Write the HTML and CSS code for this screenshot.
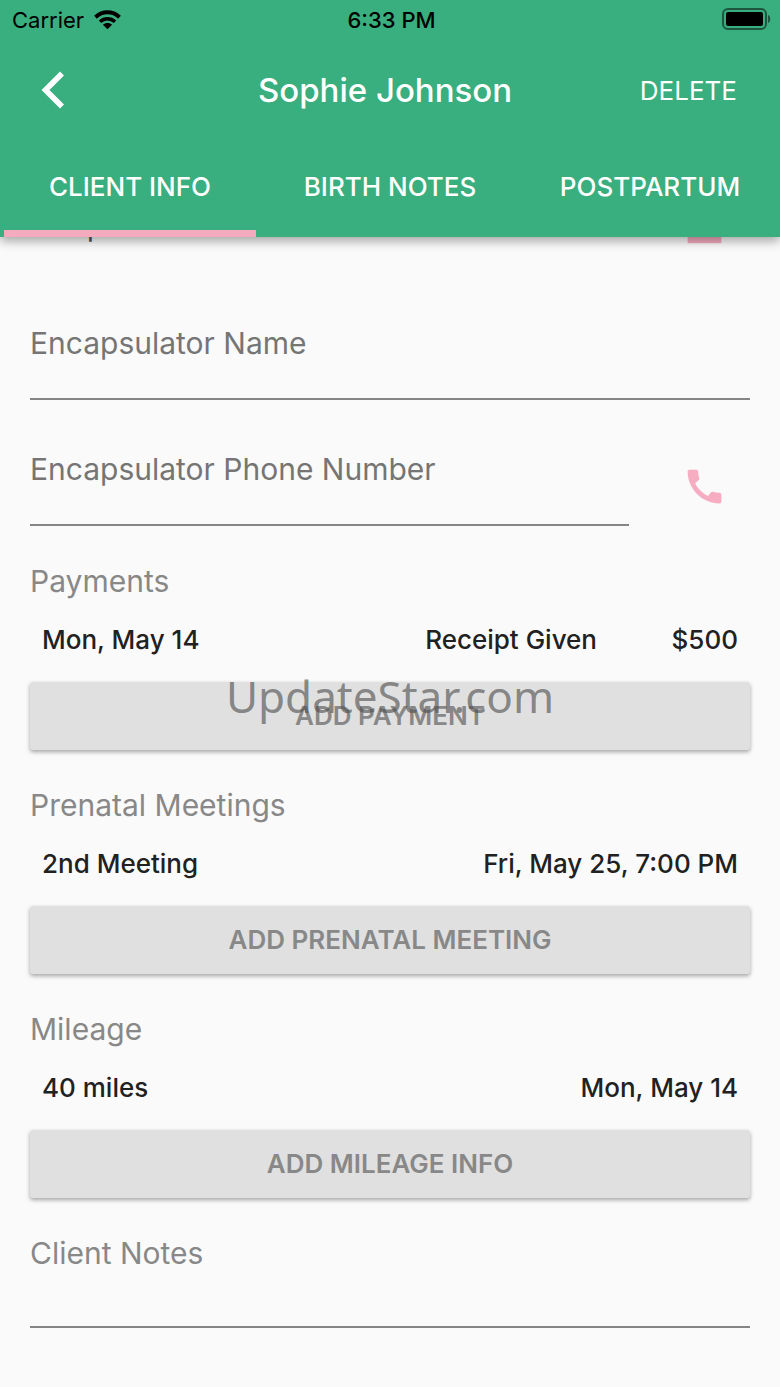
FILE: index.html
```html
<!DOCTYPE html>
<html lang="en">
<head>
    <meta charset="UTF-8">
    <meta name="viewport" content="width=device-width, initial-scale=1.0">
    <title>Sophie Johnson</title>
    <link rel="stylesheet" href="styles.css">
</head>
<body>
    <header class="app-header">
        <div class="status-bar">
            <div class="carrier">
                <span>Carrier</span>
                <svg width="28" height="20" viewBox="0 0 28 20" fill="none" stroke="#000">
                    <path d="M1.500 7.200C8.500 .6 18.500 .6 25.500 7.200" stroke-width="4"/>
                    <path d="M6 11.800c4.300-4 10.700-4 15 0" stroke-width="3.600"/>
                    <path d="M13.500 19.200l-4.600-4.400c2.600-2.300 6.600-2.300 9.200 0z" fill="#000" stroke="none"/>
                </svg>
            </div>
            <span class="time">6:33 PM</span>
            <svg class="battery" width="50" height="22" viewBox="0 0 50 22">
                <rect x="2" y="1" width="43" height="20" rx="5" fill="none" stroke="#1d573f" stroke-width="2"/>
                <rect x="5" y="4" width="37" height="14" rx="2" fill="#000"/>
                <path d="M47 7c3 1 3 7 0 8z" fill="#1d573f"/>
            </svg>
        </div>

        <div class="title-bar">
            <button class="back" type="button" aria-label="Back">
                <svg width="24" height="38" viewBox="0 0 24 38">
                    <path d="M21 2.500L4.500 19L21 35.500" fill="none" stroke="#fff" stroke-width="5.600"/>
                </svg>
            </button>
            <h1>Sophie Johnson</h1>
            <button class="delete" type="button">DELETE</button>
        </div>

        <nav class="tabs">
            <a class="tab active" href="#info">CLIENT INFO</a>
            <a class="tab" href="#birth">BIRTH NOTES</a>
            <a class="tab" href="#postpartum">POSTPARTUM</a>
        </nav>
    </header>

    <main id="info">
        <!-- Row scrolled under the header -->
        <div class="date-row">
            <span>Wrap Date</span>
            <button class="icon-button" type="button" aria-label="Pick date">
                <svg width="45" height="45" viewBox="0 0 24 24" fill="#f6adc1">
                    <path d="M19 4h-1V2h-2v2H8V2H6v2H5c-1.100 0-2 .9-2 2v16h18V6c0-1.100-.9-2-2-2zm0 14H5V9h14v9z"/>
                </svg>
            </button>
        </div>

        <div class="field">
            <label for="enc-name">Encapsulator Name</label>
            <input type="text" id="enc-name">
        </div>

        <div class="field-row">
            <div class="field">
                <label for="enc-phone">Encapsulator Phone Number</label>
                <input type="tel" id="enc-phone">
            </div>
            <button class="icon-button call" type="button" aria-label="Call">
                <svg width="45" height="45" viewBox="0 0 24 24" fill="#f6adc1">
                    <path d="M20.010 15.380c-1.230 0-2.420-.2-3.530-.56-.35-.12-.74-.03-1.010.24l-1.570 1.970c-2.830-1.350-5.480-3.900-6.890-6.830l1.950-1.660c.27-.28.35-.67.24-1.020-.37-1.110-.56-2.300-.56-3.530 0-.54-.45-.99-.99-.99H4.190C3.650 3 3 3.240 3 3.990 3 13.280 10.730 21 20.010 21c.71 0 .99-.63.99-1.180v-3.450c0-.54-.45-.99-.99-.99z"/>
                </svg>
            </button>
        </div>

        <section>
            <h2>Payments</h2>
            <div class="entry">
                <span>Mon, May 14</span>
                <span class="receipt">Receipt Given</span>
                <span class="amount">$500</span>
            </div>
            <button class="add" type="button">ADD PAYMENT</button>
            <span class="watermark">UpdateStar.com</span>
        </section>

        <section>
            <h2>Prenatal Meetings</h2>
            <div class="entry">
                <span>2nd Meeting</span>
                <span>Fri, May 25, 7:00 PM</span>
            </div>
            <button class="add" type="button">ADD PRENATAL MEETING</button>
        </section>

        <section>
            <h2>Mileage</h2>
            <div class="entry">
                <span>40 miles</span>
                <span>Mon, May 14</span>
            </div>
            <button class="add" type="button">ADD MILEAGE INFO</button>
        </section>

        <div class="notes">
            <label for="notes">Client Notes</label>
            <textarea id="notes"></textarea>
        </div>
    </main>
</body>
</html>
```
FILE: styles.css
```css
* {
    box-sizing: border-box;
}
body {
    margin: 0;
    background: #fafafa;
    color: #212121;
    font-family: Inter, "Liberation Sans", sans-serif;
    font-size: 26px;
}
button {
    border: none;
    background: none;
    padding: 0;
    font: inherit;
    color: inherit;
    cursor: pointer;
}
svg {
    display: block;
}
.app-header {
    position: sticky;
    top: 0;
    z-index: 2;
    background: #39ae7e;
    color: white;
    box-shadow: 0 4px 10px rgba(0, 0, 0, 0.35);
}
.status-bar {
    display: grid;
    grid-template-columns: 1fr auto 1fr;
    align-items: center;
    height: 40px;
    padding: 0 9px 0 12px;
    color: black;
    font-size: 22px;
}
.carrier {
    display: flex;
    align-items: center;
    gap: 10px;
}
.time {
    font-weight: 500;
}
.battery {
    justify-self: end;
    margin-bottom: 2px;
}
.title-bar {
    display: grid;
    grid-template-columns: 1fr auto 1fr;
    align-items: center;
    height: 100px;
    padding: 0 43px 0 33px;
}
.back {
    justify-self: start;
    padding: 0 8px;
}
h1 {
    margin: 0;
    font-size: 33px;
    font-weight: 500;
}
.delete {
    justify-self: end;
}
.tabs {
    display: grid;
    grid-template-columns: repeat(3, 1fr);
    height: 97px;
}
.tab {
    position: relative;
    padding-top: 31px;
    line-height: 32px;
    color: white;
    font-weight: 500;
    text-align: center;
    text-decoration: none;
}
.tab.active::after {
    content: "";
    position: absolute;
    left: 4px;
    right: 4px;
    bottom: 0;
    height: 7px;
    background: #f3abbd;
}
main {
    margin-top: -35px;
    padding: 0 30px 59px;
}
.date-row {
    display: flex;
    align-items: center;
    justify-content: space-between;
    height: 45px;
    margin-bottom: 78px;
    color: #555;
    font-size: 30px;
}
.icon-button {
    margin-right: 23px;
}
.field-row {
    display: flex;
    align-items: flex-start;
    gap: 53px;
    margin-top: 51px;
}
.field-row .field {
    flex: 1;
}
.call {
    margin-top: 13px;
}
label, h2 {
    display: block;
    margin: 0;
    color: #757575;
    font-size: 30px;
    font-weight: 400;
    line-height: 36px;
}
h2, .notes label {
    color: #888;
}
input, textarea {
    display: block;
    width: 100%;
    height: 39px;
    padding: 0;
    border: none;
    border-bottom: 2px solid #858585;
    border-radius: 0;
    background: none;
    font: inherit;
    outline: none;
    resize: none;
}
section, .notes {
    position: relative;
    margin-top: 37px;
}
.entry {
    display: flex;
    justify-content: space-between;
    margin: 23px 0 24px;
    padding: 0 12px;
    font-weight: 500;
    line-height: 36px;
}
.receipt {
    margin-left: auto;
}
.amount {
    width: 141px;
    text-align: right;
}
.add {
    display: block;
    width: 100%;
    height: 68px;
    padding-bottom: 2px;
    border-radius: 3px;
    background: #e0e0e0;
    box-shadow: 0 2px 4px rgba(0, 0, 0, 0.35);
    color: #888;
    font-weight: 600;
}
.watermark {
    position: absolute;
    left: 0;
    right: 0;
    top: 103px;
    color: rgba(80, 80, 80, 0.65);
    font-family: "Noto Sans", "Open Sans", sans-serif;
    font-size: 44px;
    line-height: 60px;
    text-align: center;
    pointer-events: none;
}
textarea {
    height: 57px;
}
```
